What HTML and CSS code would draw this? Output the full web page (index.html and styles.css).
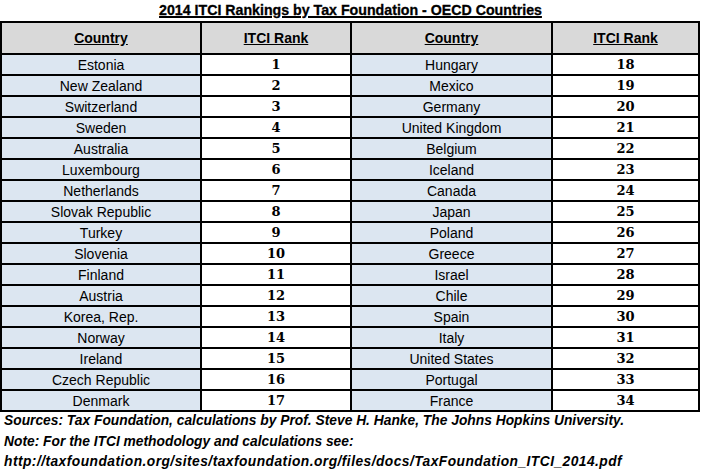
FILE: index.html
```html
<!DOCTYPE html>
<html>
<head>
<meta charset="utf-8">
<link rel="stylesheet" href="styles.css">
</head>
<body>
<div class="page">
  <h1 class="title">2014 ITCI Rankings by Tax Foundation - OECD Countries</h1>
  <div class="grid">
    <div class="hd">Country</div><div class="hd">ITCI Rank</div><div class="hd">Country</div><div class="hd">ITCI Rank</div>
    <div class="c">Estonia</div><div class="r">1</div><div class="c">Hungary</div><div class="r">18</div>
    <div class="c">New Zealand</div><div class="r">2</div><div class="c">Mexico</div><div class="r">19</div>
    <div class="c">Switzerland</div><div class="r">3</div><div class="c">Germany</div><div class="r">20</div>
    <div class="c">Sweden</div><div class="r">4</div><div class="c">United Kingdom</div><div class="r">21</div>
    <div class="c">Australia</div><div class="r">5</div><div class="c">Belgium</div><div class="r">22</div>
    <div class="c">Luxembourg</div><div class="r">6</div><div class="c">Iceland</div><div class="r">23</div>
    <div class="c">Netherlands</div><div class="r">7</div><div class="c">Canada</div><div class="r">24</div>
    <div class="c">Slovak Republic</div><div class="r">8</div><div class="c">Japan</div><div class="r">25</div>
    <div class="c">Turkey</div><div class="r">9</div><div class="c">Poland</div><div class="r">26</div>
    <div class="c">Slovenia</div><div class="r">10</div><div class="c">Greece</div><div class="r">27</div>
    <div class="c">Finland</div><div class="r">11</div><div class="c">Israel</div><div class="r">28</div>
    <div class="c">Austria</div><div class="r">12</div><div class="c">Chile</div><div class="r">29</div>
    <div class="c">Korea, Rep.</div><div class="r">13</div><div class="c">Spain</div><div class="r">30</div>
    <div class="c">Norway</div><div class="r">14</div><div class="c">Italy</div><div class="r">31</div>
    <div class="c">Ireland</div><div class="r">15</div><div class="c">United States</div><div class="r">32</div>
    <div class="c">Czech Republic</div><div class="r">16</div><div class="c">Portugal</div><div class="r">33</div>
    <div class="c">Denmark</div><div class="r">17</div><div class="c">France</div><div class="r">34</div>
  </div>
  <div class="notes">
    <p>Sources: Tax Foundation, calculations by Prof. Steve H. Hanke, The Johns Hopkins University.</p>
    <p>Note: For the ITCI methodology and calculations see:</p>
    <p class="url">http://taxfoundation.org/sites/taxfoundation.org/files/docs/TaxFoundation_ITCI_2014.pdf</p>
  </div>
</div>
</body>
</html>
```

FILE: styles.css
```css
html, body {
  margin: 0;
  padding: 0;
  background: #fff;
}
.page {
  width: 701px;
  font-family: "Liberation Sans", Arial, sans-serif;
  color: #000;
}
.title {
  margin: 0;
  height: 21px;
  line-height: 20px;
  font-size: 14.2px;
  font-weight: 700;
  text-align: center;
  text-decoration: underline;
  text-decoration-thickness: 1.5px;
  text-underline-offset: 1px;
  -webkit-text-stroke: 0.3px #000;
}
.grid {
  display: grid;
  grid-template-columns: 198px 148px 199px 145px;
  grid-template-rows: 30px repeat(17, 19px);
  gap: 2px;
  padding: 2px;
  width: max-content;
  background: #000;
}
.grid > div {
  display: flex;
  align-items: center;
  justify-content: center;
}
.hd {
  background: #d9d9d9;
  font-size: 14px;
  font-weight: 700;
  text-decoration: underline;
}
.c {
  background: #dce6f1;
  font-size: 14px;
}
.r {
  background: #fff;
  font-family: "DejaVu Serif", "Liberation Serif", serif;
  font-weight: 700;
  font-size: 13px;
}
.notes {
  margin-top: -1px;
  padding-left: 4px;
  font-size: 13.8px;
  font-weight: 700;
  font-style: italic;
}
.notes p {
  margin: 0;
  line-height: 20.5px;
}
.notes .url {
  letter-spacing: 0.45px;
}
```
